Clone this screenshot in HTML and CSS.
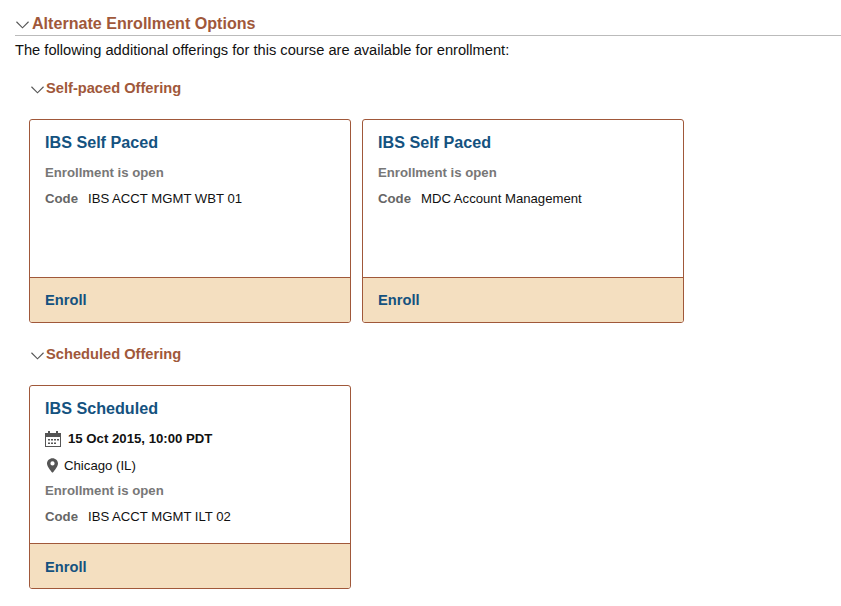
FILE: index.html
```html
<!DOCTYPE html>
<html lang="en">
<head>
<meta charset="utf-8">
<title>Alternate Enrollment Options</title>
<link rel="stylesheet" href="styles.css">
</head>
<body>
<section class="main">
  <h2 class="main-head">
    <svg class="chev chev-lg" viewBox="0 0 14 8"><path d="M0.5 0.5 L7 7 L13.5 0.5"/></svg>
    <span>Alternate Enrollment Options</span>
  </h2>
  <p class="intro">The following additional offerings for this course are available for enrollment:</p>

  <div class="group">
    <h3 class="sub-head">
      <svg class="chev chev-sm" viewBox="0 0 14 8"><path d="M0.5 0.5 L7 7 L13.5 0.5"/></svg>
      <span>Self-paced Offering</span>
    </h3>
    <div class="cards">
      <article class="card">
        <div class="card-body">
          <h4 class="card-title">IBS Self Paced</h4>
          <div class="status">Enrollment is open</div>
          <div class="code"><span class="code-label">Code</span><span>IBS ACCT MGMT WBT 01</span></div>
        </div>
        <div class="card-foot">Enroll</div>
      </article>
      <article class="card">
        <div class="card-body">
          <h4 class="card-title">IBS Self Paced</h4>
          <div class="status">Enrollment is open</div>
          <div class="code"><span class="code-label">Code</span><span>MDC Account Management</span></div>
        </div>
        <div class="card-foot">Enroll</div>
      </article>
    </div>
  </div>

  <div class="group group-second">
    <h3 class="sub-head">
      <svg class="chev chev-sm" viewBox="0 0 14 8"><path d="M0.5 0.5 L7 7 L13.5 0.5"/></svg>
      <span>Scheduled Offering</span>
    </h3>
    <div class="cards">
      <article class="card">
        <div class="card-body">
          <h4 class="card-title">IBS Scheduled</h4>
          <div class="date">
            <svg class="cal" viewBox="0 0 16 16"><path d="M0 2h3V0h2v2h6V0h2v2h3v14H0zM1 6v9h14V6z" fill="#555"/><path d="M3 8h2v1.500H3zM6 8h2v1.500H6zM9 8h2v1.500H9zM12 8h2v1.500h-2zM3 11.500h2V13H3zM6 11.500h2V13H6zM9 11.500h2V13H9z" fill="#555"/></svg>
            <span>15 Oct 2015, 10:00 PDT</span>
          </div>
          <div class="place">
            <svg class="pin" viewBox="0 0 12 16"><path fill-rule="evenodd" d="M6 0C2.700 0 0 2.600 0 5.800 0 9.800 6 16 6 16s6-6.200 6-10.200C12 2.600 9.300 0 6 0zm0 8a2.300 2.300 0 1 1 0-4.600A2.300 2.300 0 0 1 6 8z" fill="#555"/></svg>
            <span>Chicago (IL)</span>
          </div>
          <div class="status status-tight">Enrollment is open</div>
          <div class="code"><span class="code-label">Code</span><span>IBS ACCT MGMT ILT 02</span></div>
        </div>
        <div class="card-foot">Enroll</div>
      </article>
    </div>
  </div>
</section>
</body>
</html>
```

FILE: styles.css
```css
* { box-sizing: border-box; }
html, body { margin: 0; padding: 0; background: #fff; }
body { font-family: "Liberation Sans", Arial, sans-serif; color: #111; }
.main { padding: 14px 0 0 15px; }
.main-head {
  display: flex; align-items: center; margin: 0; height: 22px; padding-bottom: 2px;
  border-bottom: 1px solid #bbb; font-size: 16.1px; font-weight: bold; color: #a0583a;
}
.chev { fill: none; stroke: #555; stroke-width: 1.2; flex: none; }
.chev-lg { width: 13px; height: 8px; margin: 2px 3px 0 1px; }
.chev-sm { width: 13px; height: 8px; margin: 3px 2px 0 0; }
.intro { margin: 4px 0 0; font-size: 14.67px; line-height: 20px; }
.group { padding-left: 16px; margin-top: 20px; }
.group-second { margin-top: 23px; }
.sub-head {
  display: flex; align-items: center; margin: 0; height: 16px;
  font-size: 14.67px; font-weight: bold; color: #a0583a;
}
.cards { display: flex; gap: 11px; margin: 23px 0 0 -2px; }
.card {
  width: 322px; border: 1px solid #a0583a; border-radius: 3px;
  display: flex; flex-direction: column; overflow: hidden;
}
.card-body { height: 157px; padding: 13px 15px 0; }
.card-title { margin: 0; font-size: 16.15px; line-height: 18px; font-weight: bold; color: #14527f; }
.status { margin-top: 14px; font-size: 13.2px; line-height: 16px; font-weight: bold; color: #777; }
.status-tight { margin-top: 9px; }
.code { margin-top: 10px; display: flex; font-size: 13.15px; line-height: 16px; color: #111; }
.code-label { width: 43px; font-weight: bold; color: #666; font-size: 13.2px; }
.date, .place { display: flex; align-items: center; font-size: 13.2px; line-height: 16px; }
.date { margin-top: 14px; font-weight: bold; }
.place { margin-top: 11px; }
.cal { width: 16px; height: 16px; margin-right: 7px; }
.pin { width: 11px; height: 15px; margin: -1px 6px 0 2px; }
.card-foot {
  height: 45px; border-top: 1px solid #a0583a; background: #f4dfc0;
  padding: 13px 15px 0; font-size: 14.67px; line-height: 18px; font-weight: bold; color: #14527f;
}
.group-second .card-foot { padding-top: 14px; }
```
